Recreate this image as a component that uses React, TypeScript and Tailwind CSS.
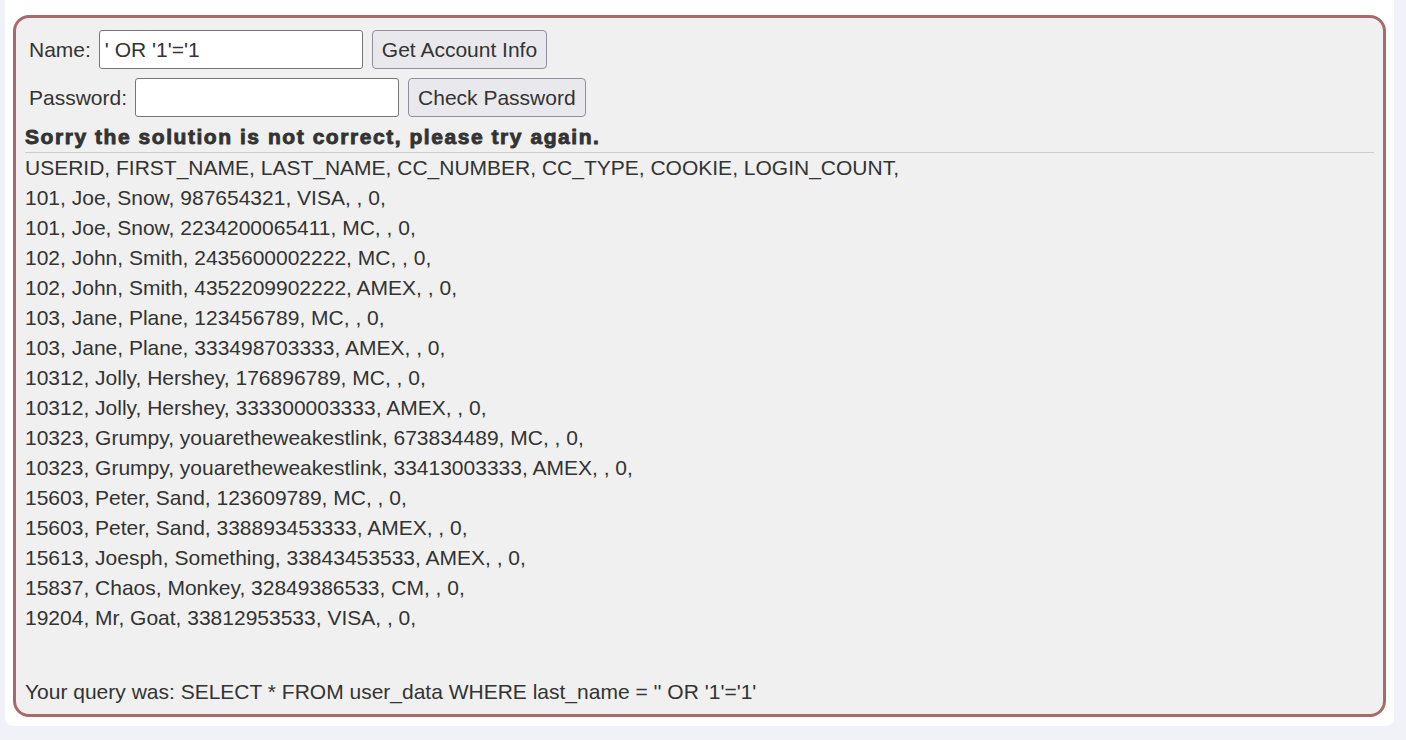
const ROWS = [
  'USERID, FIRST_NAME, LAST_NAME, CC_NUMBER, CC_TYPE, COOKIE, LOGIN_COUNT,',
  '101, Joe, Snow, 987654321, VISA, , 0,',
  '101, Joe, Snow, 2234200065411, MC, , 0,',
  '102, John, Smith, 2435600002222, MC, , 0,',
  '102, John, Smith, 4352209902222, AMEX, , 0,',
  '103, Jane, Plane, 123456789, MC, , 0,',
  '103, Jane, Plane, 333498703333, AMEX, , 0,',
  '10312, Jolly, Hershey, 176896789, MC, , 0,',
  '10312, Jolly, Hershey, 333300003333, AMEX, , 0,',
  '10323, Grumpy, youaretheweakestlink, 673834489, MC, , 0,',
  '10323, Grumpy, youaretheweakestlink, 33413003333, AMEX, , 0,',
  '15603, Peter, Sand, 123609789, MC, , 0,',
  '15603, Peter, Sand, 338893453333, AMEX, , 0,',
  '15613, Joesph, Something, 33843453533, AMEX, , 0,',
  '15837, Chaos, Monkey, 32849386533, CM, , 0,',
  '19204, Mr, Goat, 33812953533, VISA, , 0,',
];

function Field({ label, value, button, type = 'text' }: { label: string; value: string; button: string; type?: string }) {
  return (
    <div className="flex items-center pl-[4px]">
      <label className="mr-[8px]">{label}</label>
      <input
        type={type}
        defaultValue={value}
        className="h-[39px] w-[264px] rounded-[3px] border border-[#767676] bg-white px-[5px] text-[21px] text-[#333] outline-none"
      />
      <button className="ml-[9px] h-[39px] rounded-[4px] border border-[#8f8f9d] bg-[#e9e9ed] px-[9px] text-[21px] text-[#333]">
        {button}
      </button>
    </div>
  );
}

export default function App() {
  return (
    <div
      className="min-h-screen bg-[#f0f2f7] pl-[5px] text-[21px] text-[#333]"
      style={{ fontFamily: '"Liberation Sans", Arial, sans-serif' }}
    >
      <div className="w-[1389px] rounded-b-[8px] bg-white px-[8px] pt-[15px] pb-[9px]">
        <div className="h-[702px] rounded-[16px] border-[3px] border-[#a86a6a] bg-[#f0f0f0] px-[9px] pt-[12px]">
          <div className="flex flex-col gap-[9px]">
            <Field label="Name:" value="' OR '1'='1" button="Get Account Info" />
            <Field label="Password:" value="" button="Check Password" type="password" />
          </div>
          <div className="mt-[5px] font-bold leading-[30px] tracking-[1.55px] [-webkit-text-stroke:0.9px_#333]">
            Sorry the solution is not correct, please try again.
          </div>
          <div className="border-t border-[#cccccc]">
            {ROWS.map((r) => (
              <div key={r} className="leading-[30px]">{r}</div>
            ))}
          </div>
          <div className="mt-[44px] leading-[30px]">Your query was: SELECT * FROM user_data WHERE last_name = '' OR '1'='1'</div>
        </div>
      </div>
    </div>
  );
}
